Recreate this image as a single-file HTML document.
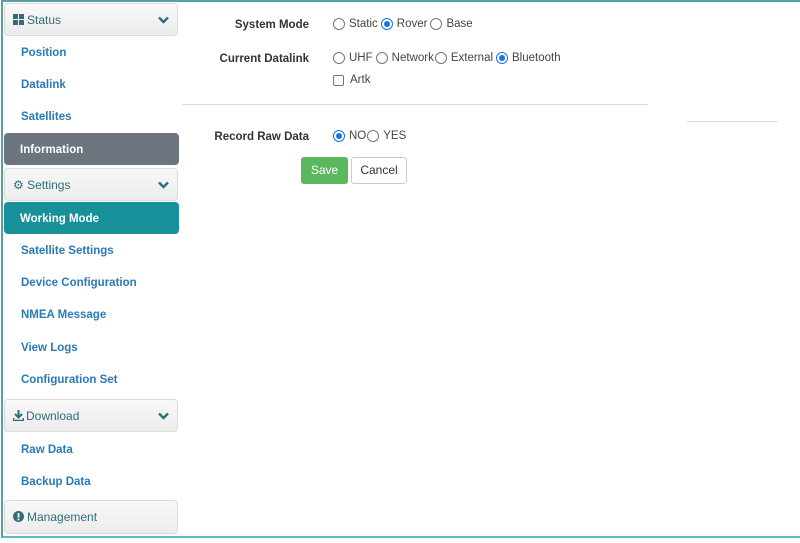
<!DOCTYPE html>
<html><head><meta charset="utf-8"><style>
*{box-sizing:border-box;margin:0;padding:0}
body{width:800px;height:543px;background:#fff;font-family:"Liberation Sans",Arial,sans-serif;position:relative;overflow:hidden}
.frame{position:absolute;left:1px;top:0;width:820px;height:538px;border-left:2px solid #5a9ea3;border-top:2px solid #5a9ea3;border-bottom:2px solid #5bb8cf}
.hd{position:absolute;left:4px;width:174px;height:33px;background:linear-gradient(#f8f8f8,#ececec);border:1px solid #dcdcdc;border-radius:4px;color:#2e6e78;font-size:12px;line-height:33px;padding-left:8px}
.hd .chev{position:absolute;right:8px;top:0;font-size:12px}
.it{position:absolute;left:21px;font-size:11.5px;font-weight:bold;color:#2a7ab8}
.act{position:absolute;left:4px;width:175px;height:32px;border-radius:4px;color:#fff;font-weight:bold;font-size:11.5px;line-height:34px;padding-left:16px}
.lbl{position:absolute;font-size:11.5px;font-weight:bold;color:#333;text-align:right;width:140px}
.opt{position:absolute;font-size:11.5px;color:#444;display:flex;align-items:center}
.r{display:inline-block;width:12px;height:12px;border:1px solid #777;border-radius:50%;margin-right:4px;margin-left:1px;position:relative}
.r.on{border-color:#1a73e8}
.r.on:after{content:"";position:absolute;left:2px;top:2px;width:6px;height:6px;border-radius:50%;background:#1a73e8}
.c{display:inline-block;width:11px;height:11px;border:1px solid #777;border-radius:2px;margin-right:6px;margin-left:1px}
</style></head><body>
<div class="frame"></div>
<div class="hd" style="top:3px"><svg width="11" height="11" style="vertical-align:-1px;margin-right:3px"><rect x="0" y="0" width="5" height="5" fill="#2e6e78"/><rect x="6" y="0" width="5" height="5" fill="#2e6e78"/><rect x="0" y="6" width="5" height="5" fill="#2e6e78"/><rect x="6" y="6" width="5" height="5" fill="#2e6e78"/></svg>Status<span class="chev"><svg width="11" height="8"><path d="M1 1.5L5.5 6L10 1.5" stroke="#2e6e78" stroke-width="2.4" fill="none"/></svg></span></div>
<div class="it" style="top:47px">Position</div>
<div class="it" style="top:79px">Datalink</div>
<div class="it" style="top:111px">Satellites</div>
<div class="act" style="top:133px;background:#6c757d">Information</div>
<div class="hd" style="top:168px"><span style="font-size:12px">⚙</span> Settings<span class="chev"><svg width="11" height="8"><path d="M1 1.5L5.5 6L10 1.5" stroke="#2e6e78" stroke-width="2.4" fill="none"/></svg></span></div>
<div class="act" style="top:202px;background:#17909a">Working Mode</div>
<div class="it" style="top:245px">Satellite Settings</div>
<div class="it" style="top:277px">Device Configuration</div>
<div class="it" style="top:309px">NMEA Message</div>
<div class="it" style="top:342px">View Logs</div>
<div class="it" style="top:374px">Configuration Set</div>
<div class="hd" style="top:399px"><svg width="11" height="11" style="vertical-align:-1px;margin-right:2px"><path d="M5.5 0V7M2 4L5.5 7.5L9 4" stroke="#2e6e78" stroke-width="2" fill="none"/><path d="M0.5 8V10.5H10.5V8" stroke="#2e6e78" stroke-width="1.6" fill="none"/></svg>Download<span class="chev"><svg width="11" height="8"><path d="M1 1.5L5.5 6L10 1.5" stroke="#2e6e78" stroke-width="2.4" fill="none"/></svg></span></div>
<div class="it" style="top:444px">Raw Data</div>
<div class="it" style="top:476px">Backup Data</div>
<div class="hd" style="top:500px;height:34px"><svg width="11" height="11" style="vertical-align:-1px;margin-right:3px"><circle cx="5.5" cy="5.5" r="5.5" fill="#2e6e78"/><rect x="4.6" y="2" width="1.8" height="4.5" fill="#fff"/><rect x="4.6" y="7.5" width="1.8" height="1.8" fill="#fff"/></svg>Management</div>

<div class="lbl" style="left:169px;top:19px">System Mode</div>
<div class="opt" style="left:332px;top:18px"><span class="r"></span>Static<span class="r on" style="margin-left:3px"></span>Rover<span class="r" style="margin-left:3px"></span>Base</div>
<div class="lbl" style="left:169px;top:53px">Current Datalink</div>
<div class="opt" style="left:332px;top:52px"><span class="r"></span>UHF<span class="r" style="margin-left:3px"></span>Network<span class="r" style="margin-left:1px"></span>External<span class="r on" style="margin-left:3px"></span>Bluetooth</div>
<div class="opt" style="left:332px;top:74px"><span class="c"></span>Artk</div>
<div style="position:absolute;left:182px;top:104px;width:466px;height:1px;background:#ddd"></div>
<div style="position:absolute;left:687px;top:121px;width:91px;height:1px;background:#ddd"></div>
<div class="lbl" style="left:169px;top:131px">Record Raw Data</div>
<div class="opt" style="left:332px;top:130px"><span class="r on"></span>NO<span class="r" style="margin-left:1px"></span>YES</div>
<div style="position:absolute;left:301px;top:157px;width:47px;height:27px;background:#5cb85c;border-radius:3px;color:#fff;font-size:12px;line-height:27px;text-align:center">Save</div>
<div style="position:absolute;left:351px;top:157px;width:56px;height:27px;background:#fff;border:1px solid #ccc;border-radius:3px;color:#333;font-size:12px;line-height:25px;text-align:center">Cancel</div>
</body></html>
